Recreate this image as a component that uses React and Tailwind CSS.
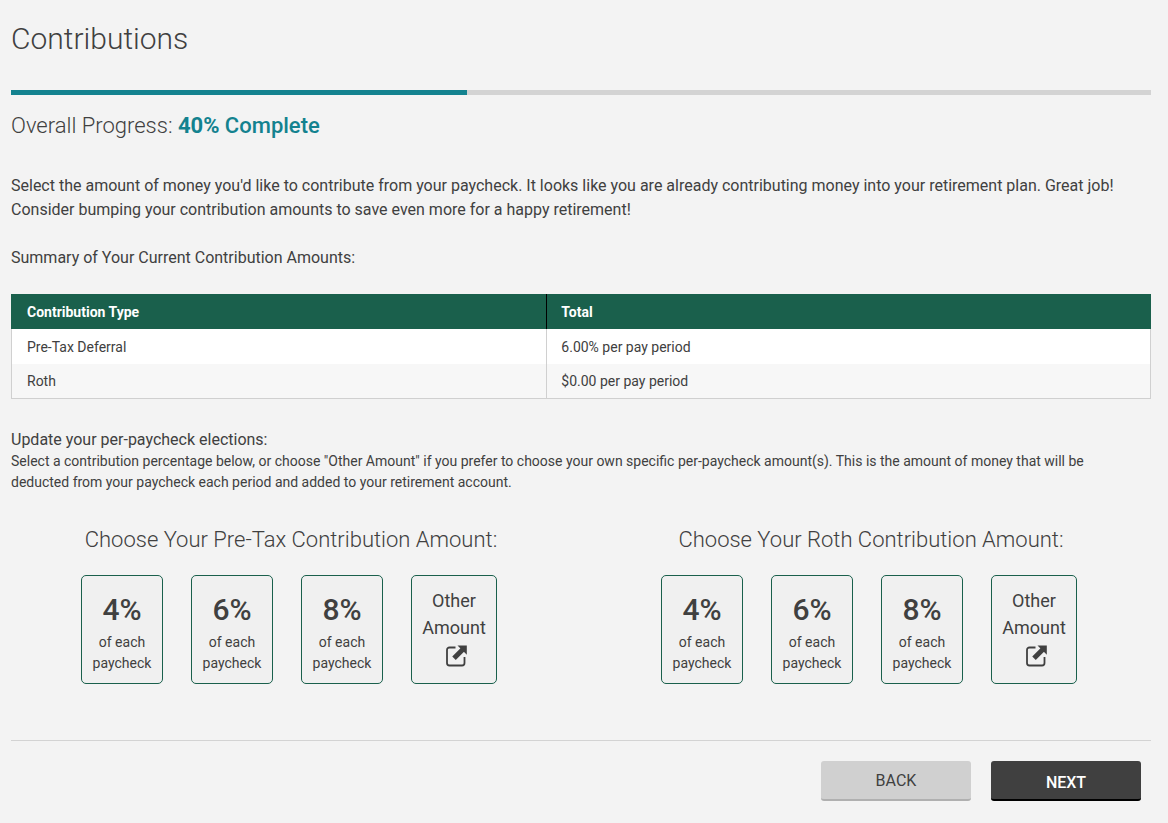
const rows = [
  ["Pre-Tax Deferral", "6.00% per pay period"],
  ["Roth", "$0.00 per pay period"],
];

function ExternalIcon() {
  return (
    <svg viewBox="0 0 22 22" className="mt-1 ml-1 h-[22px] w-[22px]" fill="none" stroke="currentColor" aria-hidden="true">
      <path d="M10.5 2.5H4.5A2.5 2.5 0 0 0 2 5v13a2.5 2.5 0 0 0 2.5 2.5h12.5a2.5 2.5 0 0 0 2.5-2.5v-6" strokeWidth="1.8" />
      <path d="M9 13.2 18 4.2" strokeWidth="5" />
      <path d="M12.5 .5h9.3v9.3z" fill="currentColor" stroke="none" />
    </svg>
  );
}

function Choices({ title }) {
  return (
    <section className="flex flex-1 flex-col items-center">
      <h2 className="text-[22px] leading-8 font-light">{title}</h2>
      <div className="mt-[19px] flex gap-7 pr-1">
        {["4%", "6%", "8%"].map((pct) => (
          <button key={pct} type="button" className="flex h-[109px] w-[82px] flex-col items-center rounded-[5px] border border-[#1a604c] bg-[#f0f0f0] pt-4">
            <span className="text-[30px] leading-9 font-medium">{pct}</span>
            <span className="mt-1 text-sm leading-[21px]">of each<br />paycheck</span>
          </button>
        ))}
        <button type="button" className="flex h-[109px] w-[86px] flex-col items-center rounded-[5px] border border-[#1a604c] bg-[#f0f0f0] pt-[11px]">
          <span className="text-lg leading-[27px]">Other<br />Amount</span>
          <ExternalIcon />
        </button>
      </div>
    </section>
  );
}

export default function App() {
  return (
    <main className="min-h-screen bg-[#f3f3f3] pt-5 pr-[17px] pl-[11px] font-['Roboto',sans-serif] text-[#404040]">
      <h1 className="text-[30px] leading-[38px] font-light">Contributions</h1>
      <div role="progressbar" aria-label="Overall Progress" aria-valuenow={40} aria-valuemin={0} aria-valuemax={100} className="mt-8 h-[5px] bg-[#d3d3d3]">
        <div className="h-full w-2/5 bg-[#13828f]" />
      </div>
      <p className="mt-[17px] text-[22px] leading-7 font-light">
        Overall Progress: <strong className="font-medium text-[#13828f]"><span className="font-bold">40%</span> Complete</strong>
      </p>
      <p className="mt-[34px] text-base leading-6">
        Select the amount of money you'd like to contribute from your paycheck. It looks like you are already contributing money into your retirement plan. Great job! Consider bumping your contribution amounts to save even more for a happy retirement!
      </p>
      <p className="mt-6 text-base leading-6">Summary of Your Current Contribution Amounts:</p>
      <table className="mt-6 w-full border-collapse text-left text-sm">
        <thead className="border-x border-[#1a604c]">
          <tr className="h-[35px] bg-[#1a604c] text-white">
            <th className="w-[47%] border-r border-black px-[15px] font-bold">Contribution Type</th>
            <th className="px-[14px] font-bold">Total</th>
          </tr>
        </thead>
        <tbody className="border border-t-0 border-[#d0d0d0]">
          {rows.map(([type, total]) => (
            <tr key={type} className="h-[35px] bg-white even:h-[34px] even:bg-[#f7f7f7]">
              <td className="border-r border-[#d0d0d0] px-[15px]">{type}</td>
              <td className="px-[14px]">{total}</td>
            </tr>
          ))}
        </tbody>
      </table>
      <h3 className="mt-[30px] text-base leading-[22px]">Update your per-paycheck elections:</h3>
      <p className="pr-3 text-sm leading-[21px]">
        Select a contribution percentage below, or choose "Other Amount" if you prefer to choose your own specific per-paycheck amount(s). This is the amount of money that will be deducted from your paycheck each period and added to your retirement account.
      </p>
      <div className="-mx-[10px] mt-[31px] flex">
        <Choices title="Choose Your Pre-Tax Contribution Amount:" />
        <Choices title="Choose Your Roth Contribution Amount:" />
      </div>
      <footer className="mt-14 flex justify-end gap-5 border-t border-[#d3d3d3] py-5 pr-[10px]">
        <button type="button" className="h-10 w-[150px] rounded-[3px] border-b-2 border-[#b0b0b0] bg-[#d0d0d0] pt-0.5 text-base">BACK</button>
        <button type="button" className="h-10 w-[150px] rounded-[3px] border-b-2 border-black bg-[#404040] pt-1.5 text-base font-medium text-white">NEXT</button>
      </footer>
    </main>
  );
}
